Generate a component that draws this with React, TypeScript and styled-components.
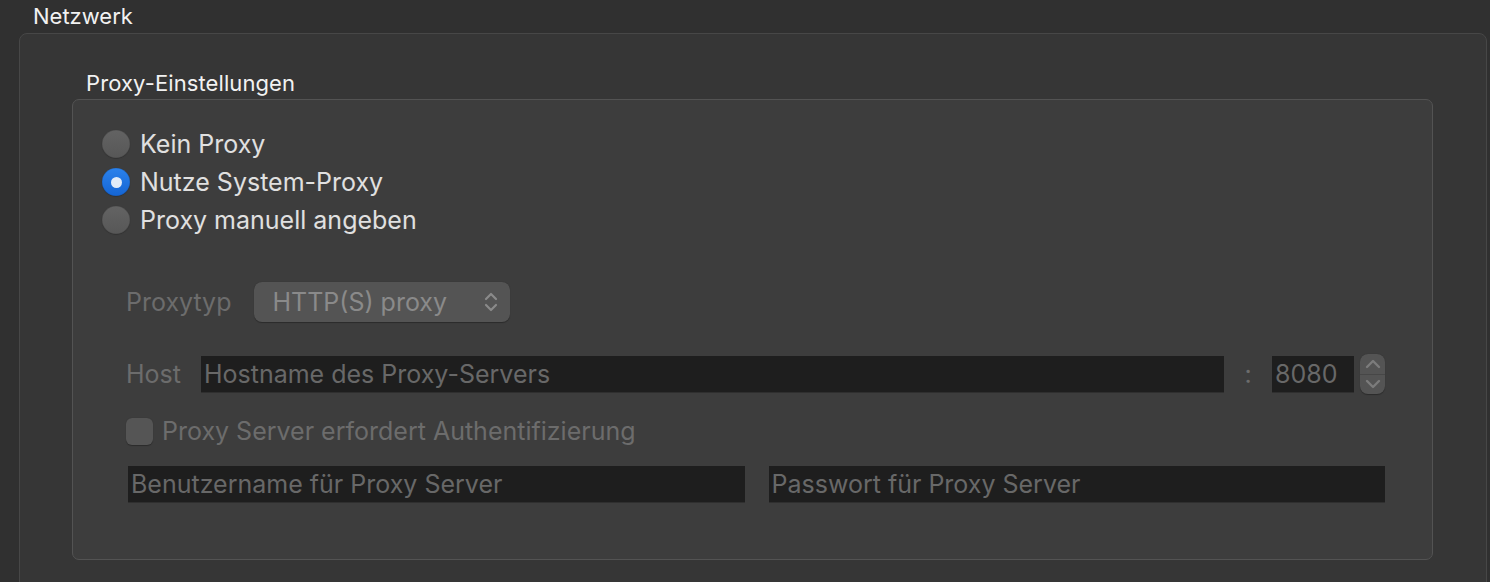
import React from "react";
import styled, { createGlobalStyle } from "styled-components";

const Global = createGlobalStyle`
  html, body { margin: 0; padding: 0; background: #303030; }
  body { width: 1490px; height: 582px; overflow: hidden; font-family: Inter, "Noto Sans", sans-serif; }
`;

const Page = styled.div`
  width: 1490px;
  height: 582px;
  box-sizing: border-box;
  padding: 3px 3px 0 19px;
  overflow: hidden;
`;

const GroupTitle = styled.div<{ $indent: number }>`
  margin-left: ${(p) => p.$indent}px;
  font-size: 22px;
  line-height: 26px;
  color: #f2f2f2;
  height: 30px;
`;

const OuterBox = styled.div`
  border: 1px solid #474747;
  border-radius: 8px;
  background: #363636;
  padding: 35px 53px 0 52px;
  height: 700px;
  box-sizing: border-box;
`;

const InnerTitle = styled(GroupTitle)`
  height: 30px;
  line-height: 28px;
  letter-spacing: 0.1px;
`;

const InnerBox = styled.div`
  border: 1px solid #535353;
  border-radius: 7px;
  background: #3d3d3d;
  padding: 25px 47px 56px 29px;
  display: flex;
  flex-direction: column;
`;

const RadioRow = styled.label`
  display: flex;
  align-items: center;
  gap: 10px;
  height: 38px;
  font-size: 25px;
  color: #e0e0e0;
`;

const RadioCircle = styled.span<{ $on?: boolean }>`
  width: 28px;
  height: 28px;
  border-radius: 50%;
  box-sizing: border-box;
  display: flex;
  align-items: center;
  justify-content: center;
  background: ${(p) => (p.$on ? "linear-gradient(#2b82ec, #1565d3)" : "linear-gradient(#636363, #575757)")};
  box-shadow: 0 0.5px 1px rgba(0, 0, 0, 0.35), inset 0 0 0 0.5px rgba(0, 0, 0, 0.15);
`;

const RadioDot = styled.span`
  width: 11px;
  height: 11px;
  border-radius: 50%;
  background: #e2ecf8;
`;

const Form = styled.div`
  display: flex;
  flex-direction: column;
  padding-left: 24px;
  margin-top: 43px;
`;

const Row = styled.div<{ $mt?: number; $gap?: number }>`
  display: flex;
  align-items: center;
  gap: ${(p) => p.$gap ?? 20}px;
  margin-top: ${(p) => p.$mt ?? 0}px;
`;

const Label = styled.span`
  font-size: 25px;
  color: #6c6c6c;
`;

const Popup = styled.div`
  width: 256px;
  height: 40px;
  box-sizing: border-box;
  border-radius: 8px;
  background: #545454;
  display: flex;
  align-items: center;
  justify-content: space-between;
  padding: 0 12px 0 18px;
  font-size: 25px;
  color: #8a8a8a;
  box-shadow: 0 0.5px 1px rgba(0, 0, 0, 0.3);
`;

const Field = styled.div<{ $w?: number; $flex?: boolean }>`
  ${(p) => (p.$flex ? "flex: 1;" : `width: ${p.$w}px;`)}
  height: 37px;
  box-sizing: border-box;
  background: #1e1e1e;
  border-bottom: 1px solid #2f2f2f;
  display: flex;
  align-items: center;
  padding-left: 3px;
  font-size: 25px;
  color: #686868;
  white-space: nowrap;
  overflow: hidden;
`;

const Colon = styled.span`
  font-size: 25px;
  color: #6c6c6c;
  width: 8px;
  text-align: center;
`;

const PortGroup = styled.div`
  display: flex;
  align-items: center;
  gap: 6px;
`;

const Stepper = styled.div`
  width: 25px;
  height: 40px;
  border-radius: 8px;
  background: #545454;
  display: flex;
  flex-direction: column;
  overflow: hidden;
  box-shadow: 0 0.5px 1px rgba(0, 0, 0, 0.3);
`;

const StepHalf = styled.div<{ $top?: boolean }>`
  flex: 1;
  display: flex;
  align-items: center;
  justify-content: center;
  ${(p) => (p.$top ? "border-bottom: 1px solid #474747;" : "")}
`;

const Check = styled.span`
  width: 27px;
  height: 27px;
  border-radius: 6px;
  background: #555555;
  box-shadow: 0 0.5px 1px rgba(0, 0, 0, 0.3);
`;

const CheckText = styled.span`
  font-size: 25px;
  color: #6c6c6c;
`;

const CredRow = styled(Row)`
  padding-left: 2px;
`;

const Chevrons = () => (
  <svg width="14" height="24" viewBox="0 0 14 24" fill="none" stroke="#8a8a8a" strokeWidth="2.2" strokeLinecap="round" strokeLinejoin="round">
    <path d="M2 9 L7 4 L12 9" />
    <path d="M2 15 L7 20 L12 15" />
  </svg>
);

const Chev = ({ up }: { up?: boolean }) => (
  <svg width="16" height="10" viewBox="0 0 16 10" fill="none" stroke="#7c7c7c" strokeWidth="2.4" strokeLinecap="round" strokeLinejoin="round">
    <path d={up ? "M2 8 L8 2 L14 8" : "M2 2 L8 8 L14 2"} />
  </svg>
);

export default function App() {
  return (
    <>
      <Global />
      <Page>
        <GroupTitle $indent={14}>Netzwerk</GroupTitle>
        <OuterBox>
          <InnerTitle $indent={14}>Proxy-Einstellungen</InnerTitle>
          <InnerBox>
            <RadioRow>
              <RadioCircle />
              Kein Proxy
            </RadioRow>
            <RadioRow>
              <RadioCircle $on>
                <RadioDot />
              </RadioCircle>
              Nutze System-Proxy
            </RadioRow>
            <RadioRow>
              <RadioCircle />
              Proxy manuell angeben
            </RadioRow>
            <Form>
              <Row $gap={23}>
                <Label>Proxytyp</Label>
                <Popup>
                  HTTP(S) proxy
                  <Chevrons />
                </Popup>
              </Row>
              <Row $mt={32} $gap={20}>
                <Label>Host</Label>
                <Field $flex>Hostname des Proxy-Servers</Field>
                <Colon>:</Colon>
                <PortGroup>
                  <Field $w={82}>8080</Field>
                  <Stepper>
                    <StepHalf $top>
                      <Chev up />
                    </StepHalf>
                    <StepHalf>
                      <Chev />
                    </StepHalf>
                  </Stepper>
                </PortGroup>
              </Row>
              <Row $mt={22} $gap={9}>
                <Check />
                <CheckText>Proxy Server erfordert Authentifizierung</CheckText>
              </Row>
              <CredRow $mt={20} $gap={24}>
                <Field $flex>Benutzername für Proxy Server</Field>
                <Field $flex>Passwort für Proxy Server</Field>
              </CredRow>
            </Form>
          </InnerBox>
        </OuterBox>
      </Page>
    </>
  );
}
